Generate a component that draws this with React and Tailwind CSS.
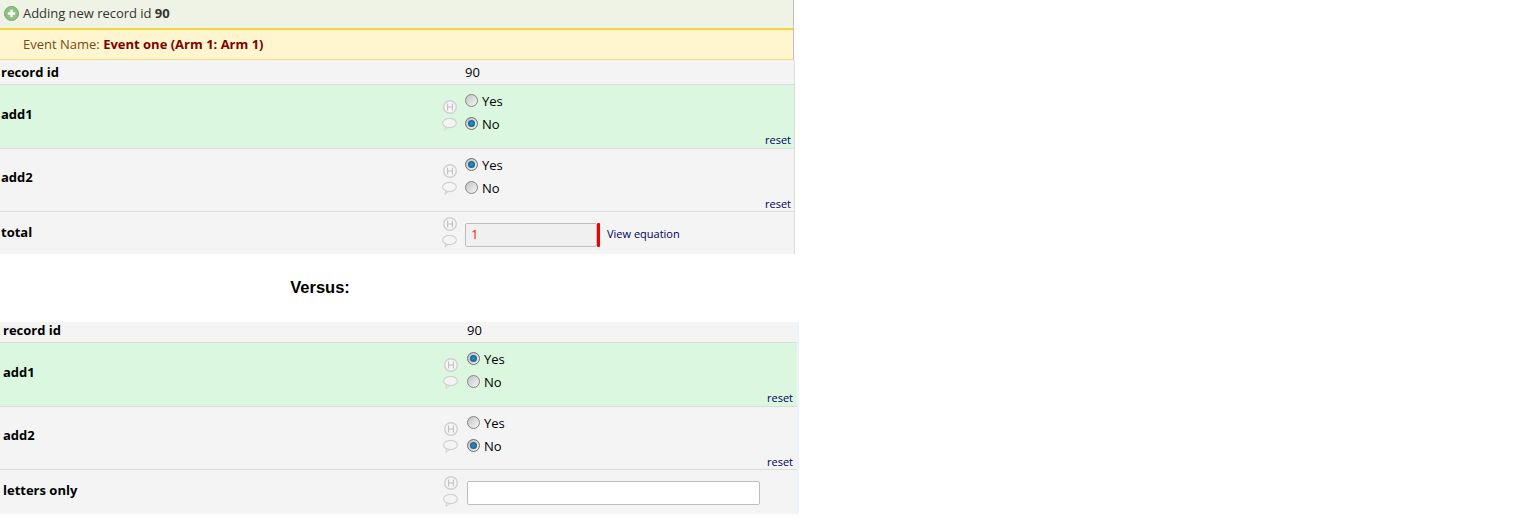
import React from 'react';

function HelpIcons({ className }) {
    return (
        <div className={`flex w-[15px] shrink-0 flex-col items-center gap-[4px] ${className || ''}`}>
            <svg width="14" height="14" viewBox="0 0 14 14">
                <circle cx="7" cy="7" r="6.3" fill="#f6f6f6" stroke="#cfcfcf" strokeWidth="1.4" />
                <path d="M4.6 3.6v6.8M9.4 3.6v6.8M4.6 7h4.8" fill="none" stroke="#c2c2c2" strokeWidth="1.2" />
            </svg>
            <svg width="15" height="13" viewBox="0 0 15 13">
                <path d="M3.6 8.6l-.6 3.8 3.8-3" fill="#f2f2f2" stroke="#cfcfcf" strokeWidth="0.9" />
                <ellipse cx="7.5" cy="5" rx="6.9" ry="4.6" fill="#f4f4f4" stroke="#cfcfcf" strokeWidth="1.1" />
            </svg>
        </div>
    );
}

function Radio({ checked, label }) {
    return (
        <div className="flex h-[23px] items-center gap-[4px]">
            <span className={`mb-[3px] flex h-[13px] w-[13px] items-center justify-center rounded-full border bg-gradient-to-br ${checked ? 'border-[#6e6e6e] from-[#bdbdbd] to-[#f4f4f4]' : 'border-[#858585] from-[#c4c4c4] to-[#f6f6f6]'}`}>
                {checked && <span className="h-[7px] w-[7px] rounded-full bg-[radial-gradient(circle,#2f8fc8,#0c4f7c)]" />}
            </span>
            <span className="text-[13px] text-black">{label}</span>
        </div>
    );
}

function RadioRow({ label, value, bg, labelClass, valueMargin, resetRight }) {
    return (
        <div className={`relative flex h-[64px] border-b border-[#dcdcdc] ${bg}`}>
            <div className={`flex shrink-0 items-center text-[13px] font-bold text-black ${labelClass}`}>{label}</div>
            <HelpIcons className="mt-[15px]" />
            <div className={`pt-[5px] ${valueMargin}`}>
                <Radio label="Yes" checked={value === 'Yes'} />
                <Radio label="No" checked={value === 'No'} />
            </div>
            <a className={`absolute bottom-[1px] text-[11px] leading-[14px] text-[#00005c] ${resetRight}`}>reset</a>
        </div>
    );
}

export default function App() {
    return (
        <div className="h-[523px] w-[1537px] overflow-hidden bg-white font-['Open_Sans',sans-serif]">
            <div className="w-[795px]">
                <div className="flex h-[28px] w-[794px] items-center gap-[4px] border-r border-[#c0c0c0] bg-[#eef3e6] pl-[4px] pb-[1px] text-[13px] text-[#333]">
                    <svg width="15" height="15" viewBox="0 0 15 15">
                        <circle cx="7.5" cy="7.5" r="7" fill="#8cc47c" stroke="#7d9f78" />
                        <path d="M7.5 3.8v7.4M3.8 7.5h7.4" stroke="#fff" strokeWidth="2.4" />
                    </svg>
                    <span className="tracking-[-0.03px]">Adding new record id <b>90</b></span>
                </div>
                <div className="flex h-[32px] w-[794px] items-center border-t-2 border-b border-r border-t-[#f5d33c] border-b-[#f7dc7c] border-r-[#c0c0c0] bg-[#fff6d0] pl-[23px] text-[13px] text-[#7a4a10]">
                    <span>Event Name: <b className="text-[#800000]">Event one (Arm 1: Arm 1)</b></span>
                </div>
                <div className="border-r border-[#dcdcdc]">
                    <div className="flex h-[25px] items-center border-b border-[#dcdcdc] bg-[#f4f4f4] pt-[1px] text-[13px] text-black">
                        <div className="w-[465px] pl-[1px] font-bold">record id</div>
                        <div>90</div>
                    </div>
                    <RadioRow label="add1" value="No" bg="bg-[#dbf7df]" labelClass="w-[442px] pl-[1px] pb-[3px]" valueMargin="ml-[8px]" resetRight="right-[3px]" />
                    <div className="h-[62px] overflow-hidden">
                        <RadioRow label="add2" value="Yes" bg="bg-[#f4f4f4]" labelClass="w-[442px] pl-[1px] pb-[5px]" valueMargin="ml-[8px]" resetRight="right-[3px]" />
                    </div>
                    <div className="flex h-[43px] border-t border-[#dcdcdc] bg-[#f4f4f4]">
                        <div className="w-[442px] shrink-0 pl-[1px] pt-[11px] text-[13px] font-bold text-black">total</div>
                        <HelpIcons className="mt-[5px]" />
                        <div className="ml-[8px] mt-[11px] flex h-[24px] items-start">
                            <div className="flex h-[24px] w-[132px] items-center rounded-[2px] border border-[#bdbdbd] bg-[#f0f0f0] pl-[5px] text-[13px] text-[#f01800]">1</div>
                            <div className="h-[24px] w-[3px] rounded-[1px] bg-[#f00000]" />
                            <a className="ml-[7px] text-[11px] leading-[21px] text-[#00005c]">View equation</a>
                        </div>
                    </div>
                </div>
            </div>

            <div className="flex h-[68px] w-[640px] items-center justify-center pb-[2px] font-['Liberation_Sans',sans-serif] text-[16.5px] font-bold text-black">
                Versus:
            </div>

            <div className="w-[799px] border-r-2 border-[#edf3fb]">
                <div className="flex h-[21px] items-center border-b border-[#dcdcdc] bg-[#f4f4f4] pb-[2px] text-[13px] text-black">
                    <div className="w-[467px] pl-[3px] font-bold">record id</div>
                    <div>90</div>
                </div>
                <RadioRow label="add1" value="Yes" bg="bg-[#dbf7df]" labelClass="w-[443px] pl-[3px] pb-[3px]" valueMargin="ml-[9px]" resetRight="right-[4px]" />
                <div className="h-[62px] overflow-hidden">
                    <RadioRow label="add2" value="No" bg="bg-[#f4f4f4]" labelClass="w-[443px] pl-[3px] pb-[5px]" valueMargin="ml-[9px]" resetRight="right-[4px]" />
                </div>
                <div className="flex h-[45px] border-t border-[#dcdcdc] bg-[#f4f4f4]">
                    <div className="w-[443px] shrink-0 pl-[3px] pt-[11px] text-[13px] font-bold text-black">letters only</div>
                    <HelpIcons className="mt-[6px]" />
                    <div className="ml-[9px] mt-[11px] h-[24px] w-[293px] rounded-[2px] border border-[#bdbdbd] bg-white" />
                </div>
            </div>
        </div>
    );
}
